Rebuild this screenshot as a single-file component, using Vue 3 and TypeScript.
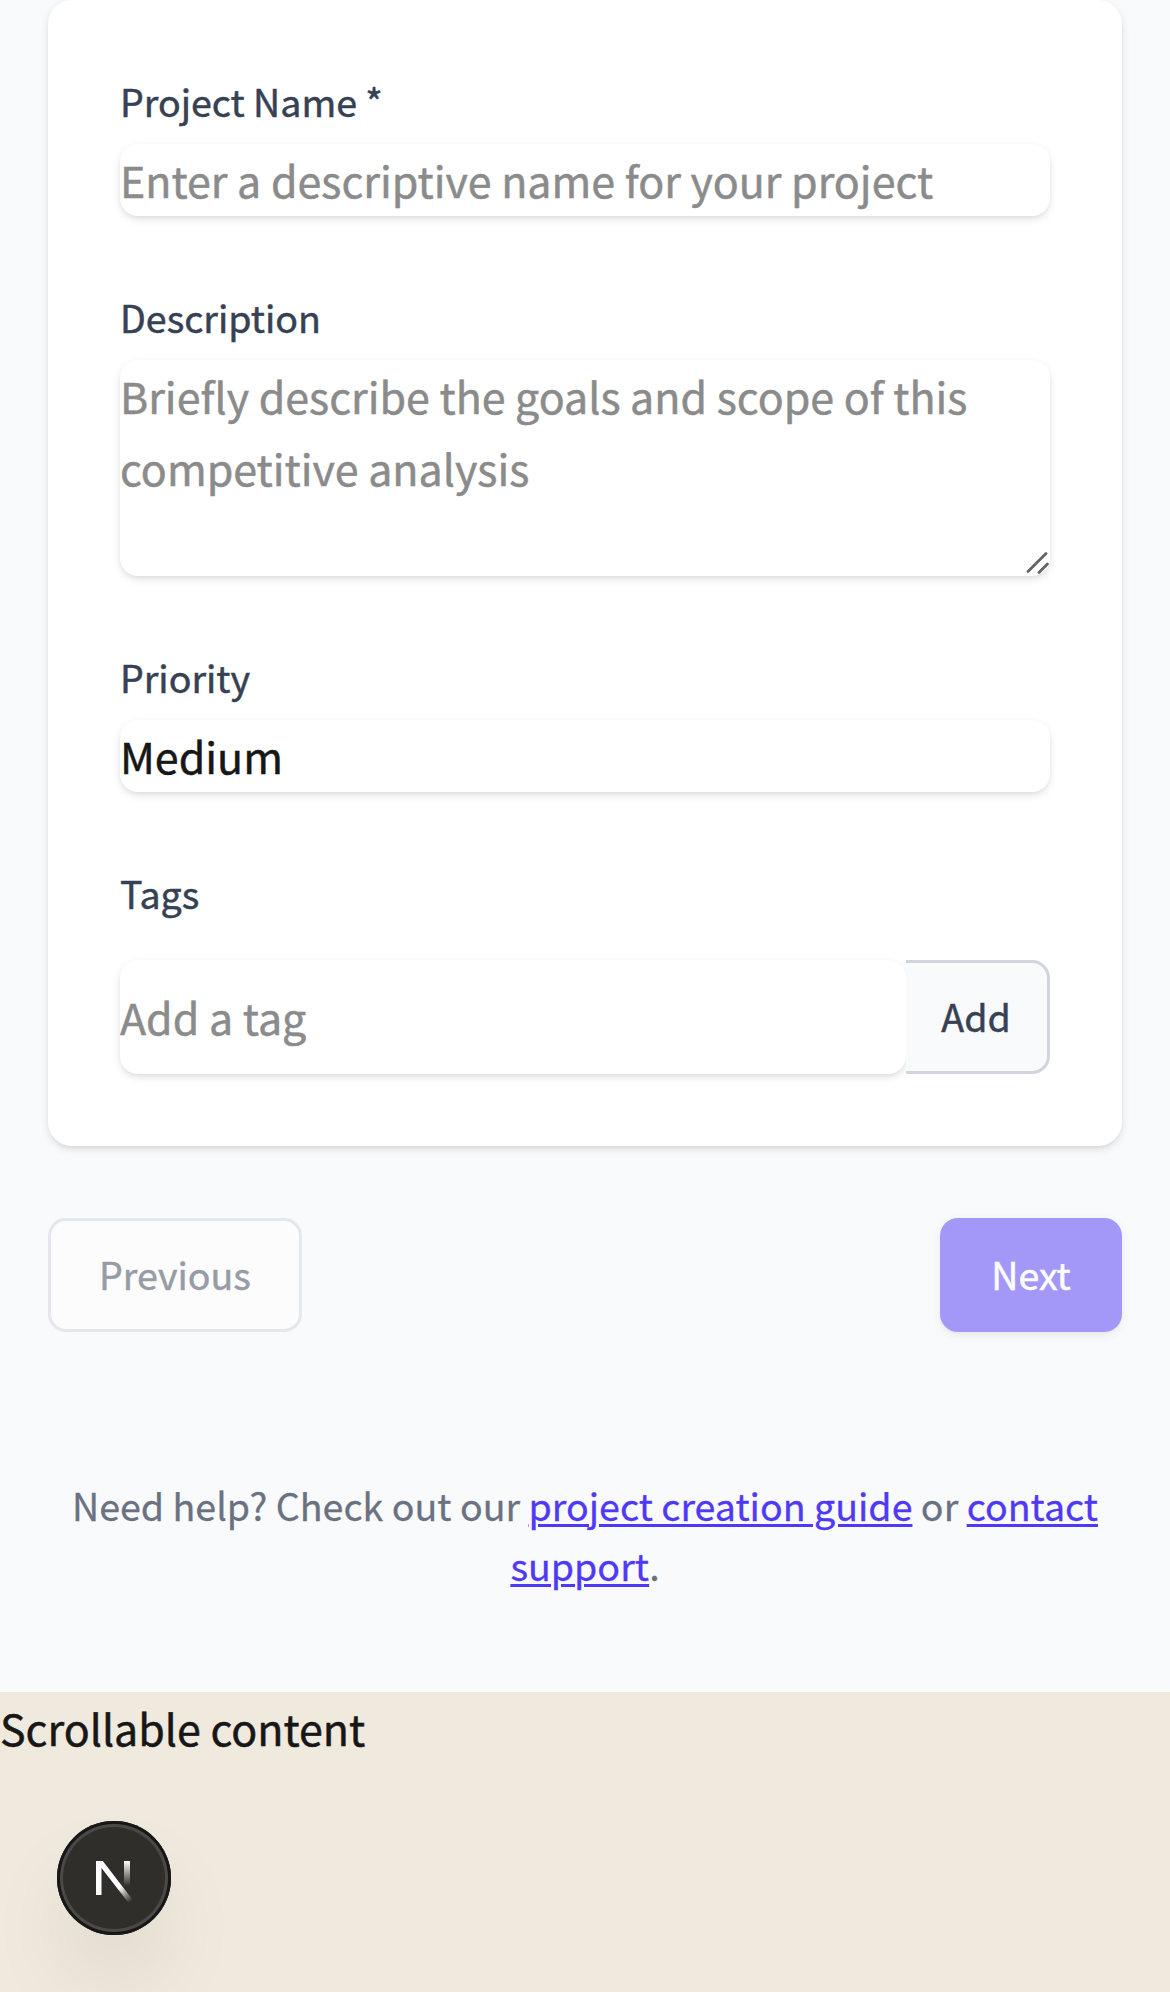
<script setup lang="ts">
import { ref } from 'vue'

const projectName = ref('')
const description = ref('')
const priority = ref('Medium')
const priorities: string[] = ['Low', 'Medium', 'High']
const tag = ref('')
</script>

<template>
  <main class="page">
    <section class="wizard">
      <form class="card" @submit.prevent>
        <div class="field">
          <label for="name">Project Name *</label>
          <input id="name" v-model="projectName" class="control" type="text" placeholder="Enter a descriptive name for your project" />
        </div>
        <div class="field">
          <label for="description">Description</label>
          <div class="area-wrap">
            <textarea id="description" v-model="description" class="control area" rows="3" placeholder="Briefly describe the goals and scope of this competitive analysis"></textarea>
            <svg class="grip" viewBox="0 0 24 24" aria-hidden="true">
              <path d="M2 21.4 20 3.4M13 22.4 21.4 14" />
            </svg>
          </div>
        </div>
        <div class="field">
          <label for="priority">Priority</label>
          <select id="priority" v-model="priority" class="control">
            <option v-for="p in priorities" :key="p" :value="p">{{ p }}</option>
          </select>
        </div>
        <div class="field">
          <label for="tag">Tags</label>
          <div class="tag-row">
            <input id="tag" v-model="tag" class="control" type="text" placeholder="Add a tag" />
            <button class="add" type="button">Add</button>
          </div>
        </div>
      </form>

      <nav class="actions">
        <button class="btn previous" type="button" disabled>Previous</button>
        <button class="btn next" type="button" disabled>Next</button>
      </nav>

      <p class="help">
        Need help? Check out our <a href="#">project creation guide</a> or <a href="#">contact support</a>.
      </p>
    </section>

    <section class="scrollable">
      <div class="caption">Scrollable content</div>
      <div class="badge">
        <svg viewBox="0 0 114 114" fill="none" aria-hidden="true">
          <defs>
            <linearGradient id="diagonal" x1="63" y1="66" x2="74" y2="80.5" gradientUnits="userSpaceOnUse">
              <stop stop-color="#fff" />
              <stop offset="1" stop-color="#fff" stop-opacity="0" />
            </linearGradient>
            <linearGradient id="stem" x1="70" y1="40" x2="70" y2="65" gradientUnits="userSpaceOnUse">
              <stop stop-color="#fff" />
              <stop offset="1" stop-color="#fff" stop-opacity="0" />
            </linearGradient>
          </defs>
          <path d="M39 74V40H45.8L76 79.2 72 82.6 44.5 47V74Z" fill="url(#diagonal)" />
          <rect x="67" y="40" width="6" height="25" fill="url(#stem)" />
        </svg>
      </div>
    </section>
  </main>
</template>

<style>
body {
  margin: 0;
  background: #f0e9dd;
}
</style>

<style scoped>
.page {
  height: 1992px;
  display: flex;
  flex-direction: column;
  overflow: hidden;
  color: #171717;
  font: 400 42.95px/72px "Noto Sans CJK SC", "Noto Sans CJK JP", sans-serif;
  -webkit-text-stroke: 0.5px;
}

.wizard {
  box-sizing: border-box;
  height: 1692px;
  padding: 0 48px 96px;
  background: #f9fafc;
}

.card {
  display: flex;
  flex-direction: column;
  gap: 72px;
  padding: 72px;
  border-radius: 24px;
  background: #fff;
  box-shadow: 0 3px 9px rgba(0, 0, 0, 0.1), 0 3px 6px -3px rgba(0, 0, 0, 0.1);
}

.field {
  display: flex;
  flex-direction: column;
  gap: 12px;
}

label {
  box-sizing: border-box;
  height: 60px;
  color: #364153;
  font-size: 37.55px;
  line-height: 58px;
}

.control {
  display: block;
  box-sizing: border-box;
  width: 100%;
  height: 72px;
  margin: 0;
  padding: 0 0 2px;
  border: 0;
  border-radius: 18px;
  outline: 0;
  appearance: none;
  background: #fff;
  color: inherit;
  font: inherit;
  line-height: 70px;
  -webkit-text-stroke: inherit;
  box-shadow: 0 3px 9px rgba(0, 0, 0, 0.1), 0 3px 6px -3px rgba(0, 0, 0, 0.1);
}

.control::placeholder {
  color: #8b8b8b;
  opacity: 1;
}

.area-wrap {
  position: relative;
  display: flow-root;
  height: 216px;
  border-radius: 18px;
  background: #fff;
  box-shadow: 0 3px 9px rgba(0, 0, 0, 0.1), 0 3px 6px -3px rgba(0, 0, 0, 0.1);
}

.area {
  height: 216px;
  margin-top: -1px;
  padding: 0;
  background: transparent;
  box-shadow: none;
  line-height: 72px;
  resize: none;
  overflow: hidden;
}

.grip {
  position: absolute;
  right: 0;
  bottom: 2px;
  width: 24px;
  height: 24px;
  fill: none;
  stroke: #646464;
  stroke-width: 2.8;
  stroke-linecap: round;
}

.tag-row {
  display: flex;
  margin-top: 24px;
}

.tag-row .control {
  flex: 1;
  width: auto;
  min-width: 0;
  height: 114px;
}

.add {
  box-sizing: border-box;
  position: relative;
  width: 144px;
  height: 114px;
  padding: 0 1px 2px 0;
  border: 3px solid #d1d5dc;
  border-left: 0;
  border-radius: 0 18px 18px 0;
  background: #f9fafc;
  color: #364153;
  font: inherit;
  font-size: 37.55px;
  line-height: 60px;
  -webkit-text-stroke: inherit;
}

.actions {
  display: flex;
  justify-content: space-between;
  margin-top: 72px;
}

.btn {
  box-sizing: border-box;
  height: 114px;
  padding: 0 0 2px;
  border: 0;
  border-radius: 18px;
  font: inherit;
  font-size: 37.55px;
  line-height: 60px;
  -webkit-text-stroke: inherit;
  opacity: 0.5;
}

.previous {
  width: 254px;
  border: 3px solid #d1d5dc;
  background: #fff;
  color: #364153;
}

.next {
  width: 182px;
  background: #4f39f6;
  color: #fff;
  box-shadow: 0 3px 9px rgba(0, 0, 0, 0.1), 0 3px 6px -3px rgba(0, 0, 0, 0.1);
}

.help {
  margin: 143px 0 0;
  color: #6a7282;
  font-size: 37.6px;
  line-height: 60px;
  text-align: center;
  -webkit-text-stroke: 0.3px;
}

.help a {
  color: #4f39f6;
  text-decoration: underline;
  text-decoration-thickness: 3px;
  text-underline-offset: 3px;
}

.scrollable {
  flex: 1;
  background: #f0e9dd;
}

.caption {
  height: 72px;
  line-height: 70px;
}

.badge {
  box-sizing: border-box;
  width: 114px;
  height: 114px;
  margin: 57px 0 0 57px;
  border-radius: 50%;
  background: #2f2e2a;
  box-shadow: inset 0 0 0 3px #171717, inset 0 0 0 6px #4a4947, 0 48px 96px -24px rgba(0, 0, 0, 0.2);
}

.badge svg {
  display: block;
  width: 114px;
  height: 114px;
}
</style>
